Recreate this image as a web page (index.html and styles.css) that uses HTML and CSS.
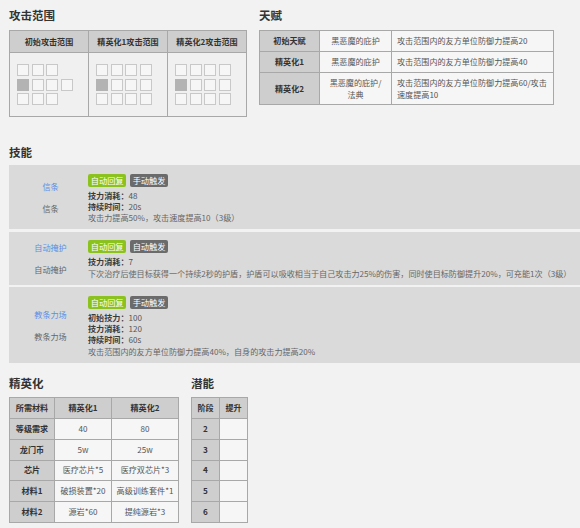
FILE: index.html
```html
<!DOCTYPE html>
<html lang="zh">
<head>
<meta charset="utf-8">
<link rel="stylesheet" href="styles.css">
</head>
<body>
<div class="top">
  <div class="block attack">
    <div class="section-title">攻击范围</div>
    <table class="tbl range-tbl">
      <tr><th>初始攻击范围</th><th>精英化1攻击范围</th><th>精英化2攻击范围</th></tr>
      <tr>
        <td>
          <div class="grid">
            <div class="grow"><i></i><i></i><i></i></div>
            <div class="grow"><i class="on"></i><i></i><i></i><i></i></div>
            <div class="grow"><i></i><i></i><i></i></div>
          </div>
        </td>
        <td>
          <div class="grid">
            <div class="grow"><i></i><i></i><i></i><i></i></div>
            <div class="grow"><i class="on"></i><i></i><i></i><i></i></div>
            <div class="grow"><i></i><i></i><i></i><i></i></div>
          </div>
        </td>
        <td>
          <div class="grid">
            <div class="grow"><i></i><i></i><i></i><i></i></div>
            <div class="grow"><i class="on"></i><i></i><i></i><i></i></div>
            <div class="grow"><i></i><i></i><i></i><i></i></div>
          </div>
        </td>
      </tr>
    </table>
  </div>
  <div class="block talent">
    <div class="section-title">天赋</div>
    <table class="tbl talent-tbl">
      <tr><th>初始天赋</th><td class="c">黑恶魔的庇护</td><td class="l">攻击范围内的友方单位防御力提高20</td></tr>
      <tr><th>精英化1</th><td class="c">黑恶魔的庇护</td><td class="l">攻击范围内的友方单位防御力提高40</td></tr>
      <tr class="tall"><th>精英化2</th><td class="c">黑恶魔的庇护/<br>法典</td><td class="l">攻击范围内的友方单位防御力提高60/攻击<br>速度提高10</td></tr>
    </table>
  </div>
</div>

<div class="section-title skills-title">技能</div>
<div class="skills">
  <div class="skill">
    <div class="skill-names"><span class="sn-blue">信条</span><span class="sn-gray">信条</span></div>
    <div class="skill-body">
      <div class="badges"><span class="badge green">自动回复</span><span class="badge gray">手动触发</span></div>
      <div class="line"><b>技力消耗：</b>48</div>
      <div class="line"><b>持续时间：</b>20s</div>
      <div class="line desc">攻击力提高50%，攻击速度提高10（3级）</div>
    </div>
  </div>
  <div class="skill">
    <div class="skill-names"><span class="sn-blue">自动掩护</span><span class="sn-gray">自动掩护</span></div>
    <div class="skill-body">
      <div class="badges"><span class="badge green">自动回复</span><span class="badge gray">自动触发</span></div>
      <div class="line"><b>技力消耗：</b>7</div>
      <div class="line desc">下次治疗后使目标获得一个持续2秒的护盾，护盾可以吸收相当于自己攻击力25%的伤害，同时使目标防御提升20%，可充能1次（3级）</div>
    </div>
  </div>
  <div class="skill">
    <div class="skill-names"><span class="sn-blue">教条力场</span><span class="sn-gray">教条力场</span></div>
    <div class="skill-body">
      <div class="badges"><span class="badge green">自动回复</span><span class="badge gray">手动触发</span></div>
      <div class="line"><b>初始技力：</b>100</div>
      <div class="line"><b>技力消耗：</b>120</div>
      <div class="line"><b>持续时间：</b>60s</div>
      <div class="line desc">攻击范围内的友方单位防御力提高40%，自身的攻击力提高20%</div>
    </div>
  </div>
</div>

<div class="bottom">
  <div class="block">
    <div class="section-title">精英化</div>
    <table class="tbl elite-tbl">
      <tr class="hr"><th>所需材料</th><th>精英化1</th><th>精英化2</th></tr>
      <tr><th>等级需求</th><td>40</td><td>80</td></tr>
      <tr><th>龙门币</th><td>5w</td><td>25w</td></tr>
      <tr><th>芯片</th><td>医疗芯片*5</td><td>医疗双芯片*3</td></tr>
      <tr><th>材料1</th><td>破损装置*20</td><td>高级训练套件*1</td></tr>
      <tr><th>材料2</th><td>源岩*60</td><td>提纯源岩*3</td></tr>
    </table>
  </div>
  <div class="block">
    <div class="section-title">潜能</div>
    <table class="tbl pot-tbl">
      <tr class="hr"><th>阶段</th><th>提升</th></tr>
      <tr><th>2</th><td></td></tr>
      <tr><th>3</th><td></td></tr>
      <tr><th>4</th><td></td></tr>
      <tr><th>5</th><td></td></tr>
      <tr><th>6</th><td></td></tr>
    </table>
  </div>
</div>
</body>
</html>
```

FILE: styles.css
```css
html, body {
  background: #f2f2f2;
}
body {
  margin: 0;
  padding: 5px 0 0 9px;
  font-family: "Noto Sans CJK SC", "Noto Sans", sans-serif;
  font-size: 8.1px;
  color: #555;
}
.top {
  display: flex;
  gap: 12px;
  align-items: flex-start;
}
.section-title {
  font-size: 11.5px;
  font-weight: bold;
  color: #333;
  height: 20px;
  line-height: 20px;
  margin-bottom: 5px;
}
.tbl {
  border-collapse: collapse;
  table-layout: fixed;
}
.tbl th, .tbl td {
  border: 1px solid #a8a8a8;
  padding: 0;
  text-align: center;
  vertical-align: middle;
  line-height: 12px;
  white-space: nowrap;
}
.tbl th {
  background: #cecece;
  color: #333;
  font-weight: bold;
}
.tbl td {
  background: #f6f6f6;
  color: #555;
}
.range-tbl {
  width: 238px;
}
.range-tbl th {
  height: 21px;
}
.range-tbl td {
  height: 63px;
  background: #f0f0f0;
  text-align: left;
  padding-left: 7px;
}
.grid {
  display: flex;
  flex-direction: column;
  gap: 2.3px;
}
.grow {
  display: flex;
  gap: 2.6px;
}
.grow i {
  display: block;
  width: 12px;
  height: 12px;
  box-sizing: border-box;
  border: 1px solid #c8c8c8;
  background: #f6f6f6;
}
.grow i.on {
  background: #b3b3b3;
  border-color: #b3b3b3;
}
.talent-tbl {
  width: 295px;
}
.talent-tbl th { width: 59px; height: 20px; }
.talent-tbl td.c { width: 71px; }
.talent-tbl td.l {
  text-align: left;
  padding-left: 5px;
}
.talent-tbl tr.tall th { height: 31px; }
.skills-title {
  margin-top: 25px;
  margin-bottom: 3px;
}
.skills {
  display: flex;
  flex-direction: column;
  gap: 2.4px;
}
.skill {
  display: flex;
  background: #dadada;
}
.skill-names {
  width: 79px;
  flex: none;
  box-sizing: border-box;
  padding-left: 4px;
  display: flex;
  flex-direction: column;
  justify-content: center;
  align-items: center;
  gap: 11px;
  line-height: 11px;
}
.sn-blue { color: #5d8ee8; }
.sn-gray { color: #666; }
.skill-body {
  flex: 1;
  padding: 8.5px 0 6px 0;
  white-space: nowrap;
}
.badges {
  display: flex;
  gap: 3.5px;
  margin-bottom: 3px;
}
.badge {
  height: 13px;
  line-height: 13px;
  font-size: 8.2px;
  padding: 0 2.8px;
  color: #fff;
  border-radius: 2px;
}
.badge.green { background: #8cc21f; }
.badge.gray { background: #6b6b6b; }
.line {
  line-height: 11.3px;
  color: #555;
}
.line b {
  color: #3a3a3a;
}
.line.desc {
  color: #666;
}
.bottom {
  display: flex;
  gap: 12px;
  margin-top: 10px;
}
.bottom .section-title {
  margin-bottom: 4px;
}
.elite-tbl {
  width: 170px;
}
.elite-tbl th:first-child { width: 44px; }
.elite-tbl tr > :nth-child(2) { width: 56px; }
.elite-tbl tr.hr th { height: 20px; }
.elite-tbl th, .elite-tbl td { height: 19.8px; }
.pot-tbl {
  width: 55px;
}
.pot-tbl th, .pot-tbl td { height: 19.8px; width: 27px; }
.pot-tbl tr.hr th { height: 20px; }
```
